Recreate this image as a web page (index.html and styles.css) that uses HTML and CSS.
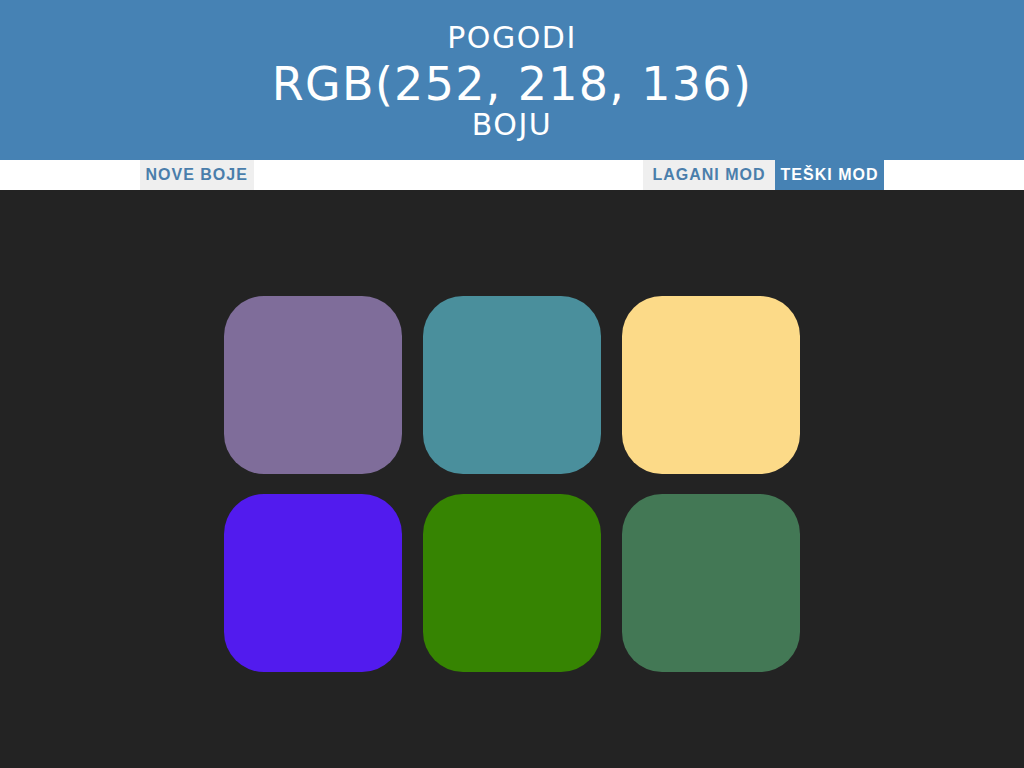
FILE: index.html
```html
<!DOCTYPE html>
<html lang="hr">
<head>
<meta charset="utf-8">
<title>Pogodi boju</title>
<link rel="stylesheet" href="styles.css">
</head>
<body>
<header class="header">
  <h1 class="title">
    <span class="title-small">POGODI</span>
    <span class="title-rgb">RGB(252, 218, 136)</span>
    <span class="title-small title-last">BOJU</span>
  </h1>
</header>
<nav class="stripe">
  <div class="stripe-inner">
    <button class="btn">NOVE BOJE</button>
    <span class="message"></span>
    <div class="modes">
      <button class="btn">LAGANI MOD</button>
      <button class="btn selected">TEŠKI MOD</button>
    </div>
  </div>
</nav>
<main class="board">
  <div class="square" style="background: #7f6d9a"></div>
  <div class="square" style="background: #4a8f9c"></div>
  <div class="square" style="background: #fcda88"></div>
  <div class="square" style="background: #521bee"></div>
  <div class="square" style="background: #368402"></div>
  <div class="square" style="background: #437855"></div>
</main>
</body>
</html>
```
FILE: styles.css
```css
* { box-sizing: border-box; }
html, body {
  margin: 0;
  padding: 0;
  background: #232323;
  height: 100%;
}
.header {
  background: #4682b4;
  height: 160px;
  padding-top: 21px;
  color: #ffffff;
  text-align: center;
}
.title {
  margin: 0;
  font-family: "DejaVu Sans", Verdana, sans-serif;
  font-weight: normal;
}
.title span { display: block; }
.title-small {
  font-size: 30px;
  line-height: 34px;
  letter-spacing: 1.5px;
}
.title-rgb {
  font-size: 46px;
  line-height: 58px;
  letter-spacing: 1.3px;
}
.title-last {
  line-height: 23px;
}
.stripe {
  background: #ffffff;
  height: 30px;
}
.stripe-inner {
  width: 745px;
  margin: 0 auto;
  height: 30px;
  display: flex;
  justify-content: space-between;
}
.modes { display: flex; }
.btn {
  border: none;
  margin: 0;
  background: #efefef;
  color: #4a7eab;
  font-family: "Liberation Sans", Arial, sans-serif;
  font-weight: bold;
  font-size: 16px;
  letter-spacing: 1px;
  height: 30px;
  line-height: 30px;
  padding: 0 6px;
  text-transform: uppercase;
}
.modes .btn:first-child { padding: 0 9px; }
.btn.selected {
  background: #4682b4;
  color: #ffffff;
}
.board {
  width: 576px;
  margin: 0 auto;
  padding-top: 106px;
  display: grid;
  grid-template-columns: repeat(3, 178px);
  column-gap: 21px;
  row-gap: 20px;
}
.square {
  width: 178px;
  height: 178px;
  border-radius: 40px;
}
```
